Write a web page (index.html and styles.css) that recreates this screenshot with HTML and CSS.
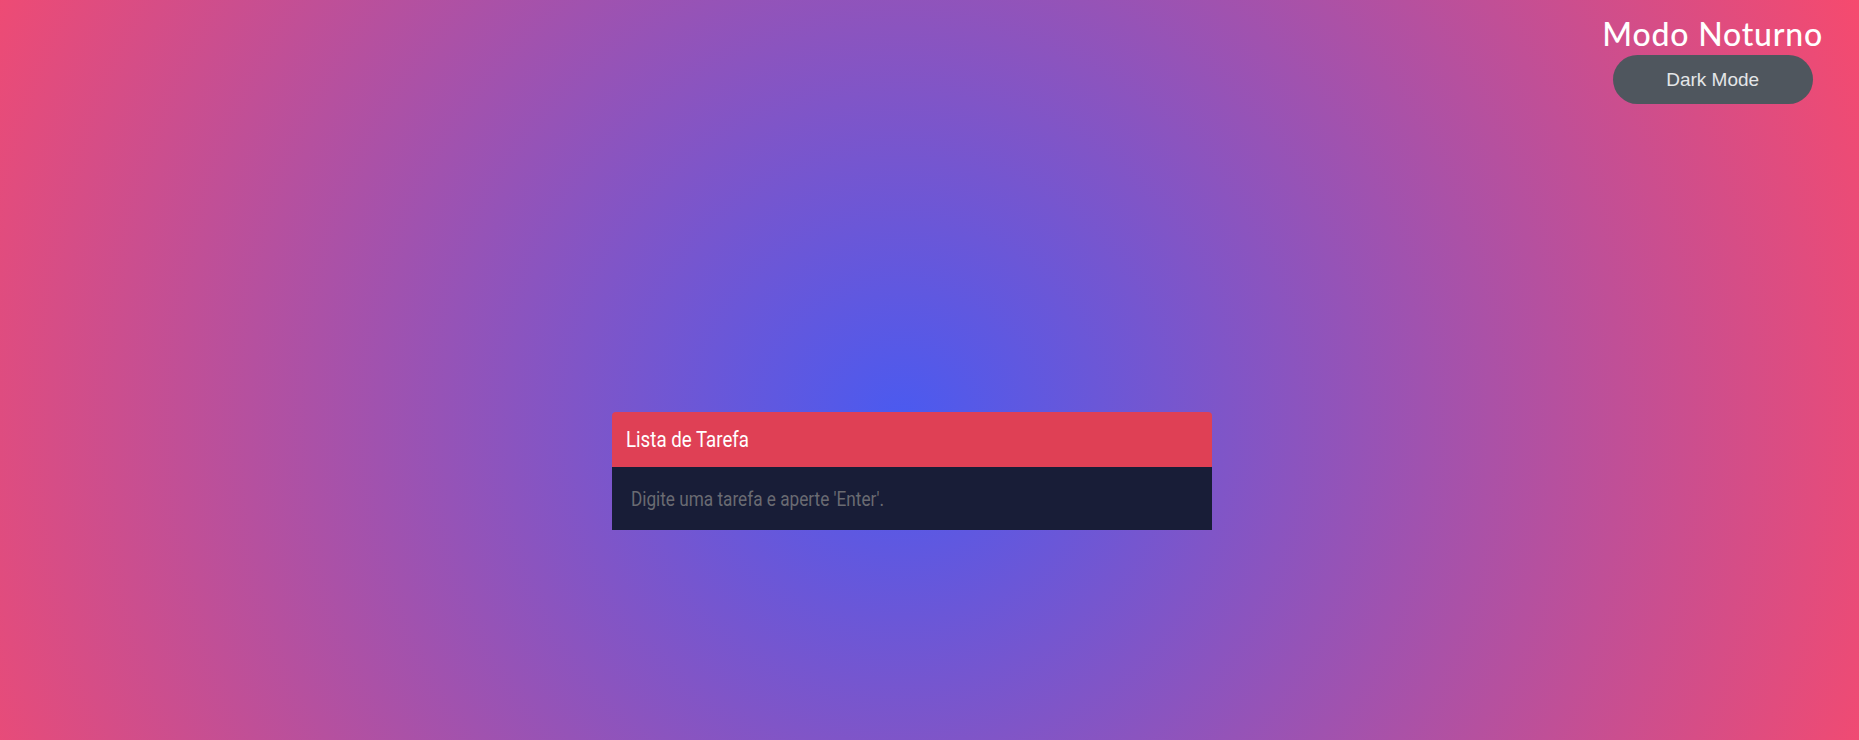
FILE: index.html
```html
<!DOCTYPE html>
<html lang="pt-BR">
<head>
<meta charset="utf-8">
<title>Lista de Tarefa</title>
<link rel="stylesheet" href="styles.css">
</head>
<body>
  <div class="page">
    <header class="topbar">
      <div class="theme-box">
        <h2 class="theme-title">Modo Noturno</h2>
        <button class="theme-btn" type="button">Dark Mode</button>
      </div>
    </header>
    <main class="main">
      <section class="card">
        <div class="card-head"><span class="card-title">Lista de Tarefa</span></div>
        <div class="card-body">
          <input class="task-input" type="text" placeholder="Digite uma tarefa e aperte 'Enter'.">
        </div>
      </section>
    </main>
  </div>
</body>
</html>
```
FILE: styles.css
```css
* { box-sizing: border-box; }

html, body {
  margin: 0;
  padding: 0;
}

body {
  min-height: 740px;
  background: radial-gradient(circle at 48.5% 57%, #4a5af0 0%, #f64a6e 100%);
  font-family: "Liberation Sans", Arial, sans-serif;
}

.page {
  min-height: 740px;
  display: flex;
  flex-direction: column;
}

.topbar {
  display: flex;
  justify-content: flex-end;
  padding: 15px 36px 0 0;
}

.theme-box {
  display: flex;
  flex-direction: column;
  align-items: center;
  gap: 2px;
}

.theme-title {
  margin: 0;
  font-family: "Lato", "Open Sans", sans-serif;
  font-weight: 500;
  font-size: 32px;
  letter-spacing: 0.8px;
  line-height: 1.2;
  color: #ffffff;
  white-space: nowrap;
}

.theme-btn {
  width: 200px;
  height: 49px;
  border: none;
  border-radius: 25px;
  background: #4f565e;
  color: #e4e6e8;
  font-family: "Liberation Sans", Arial, sans-serif;
  font-size: 19px;
  padding: 0;
  cursor: pointer;
}

.main {
  display: flex;
  justify-content: center;
  padding: 308px 35px 0 0;
}

.card {
  width: 600px;
  border-radius: 4px 4px 0 0;
  overflow: hidden;
}

.card-head {
  height: 55px;
  display: flex;
  align-items: center;
  padding-left: 14px;
  background: #df4055;
}

.card-title {
  display: inline-block;
  color: #ffffff;
  font-family: "Roboto", sans-serif;
  font-size: 21.5px;
  transform: scaleX(0.87);
  transform-origin: left center;
  white-space: nowrap;
}

.card-body {
  height: 63px;
  display: flex;
  align-items: center;
  background: #181d37;
  overflow: hidden;
}

.task-input {
  flex: none;
  width: 698px;
  height: 100%;
  border: none;
  outline: none;
  background: transparent;
  padding: 0 0 0 22px;
  color: #d0d0d0;
  font-family: "Roboto", sans-serif;
  font-size: 20px;
  transform: scaleX(0.86);
  transform-origin: left center;
}

.task-input::placeholder {
  color: #6a6b72;
  opacity: 1;
}
```
